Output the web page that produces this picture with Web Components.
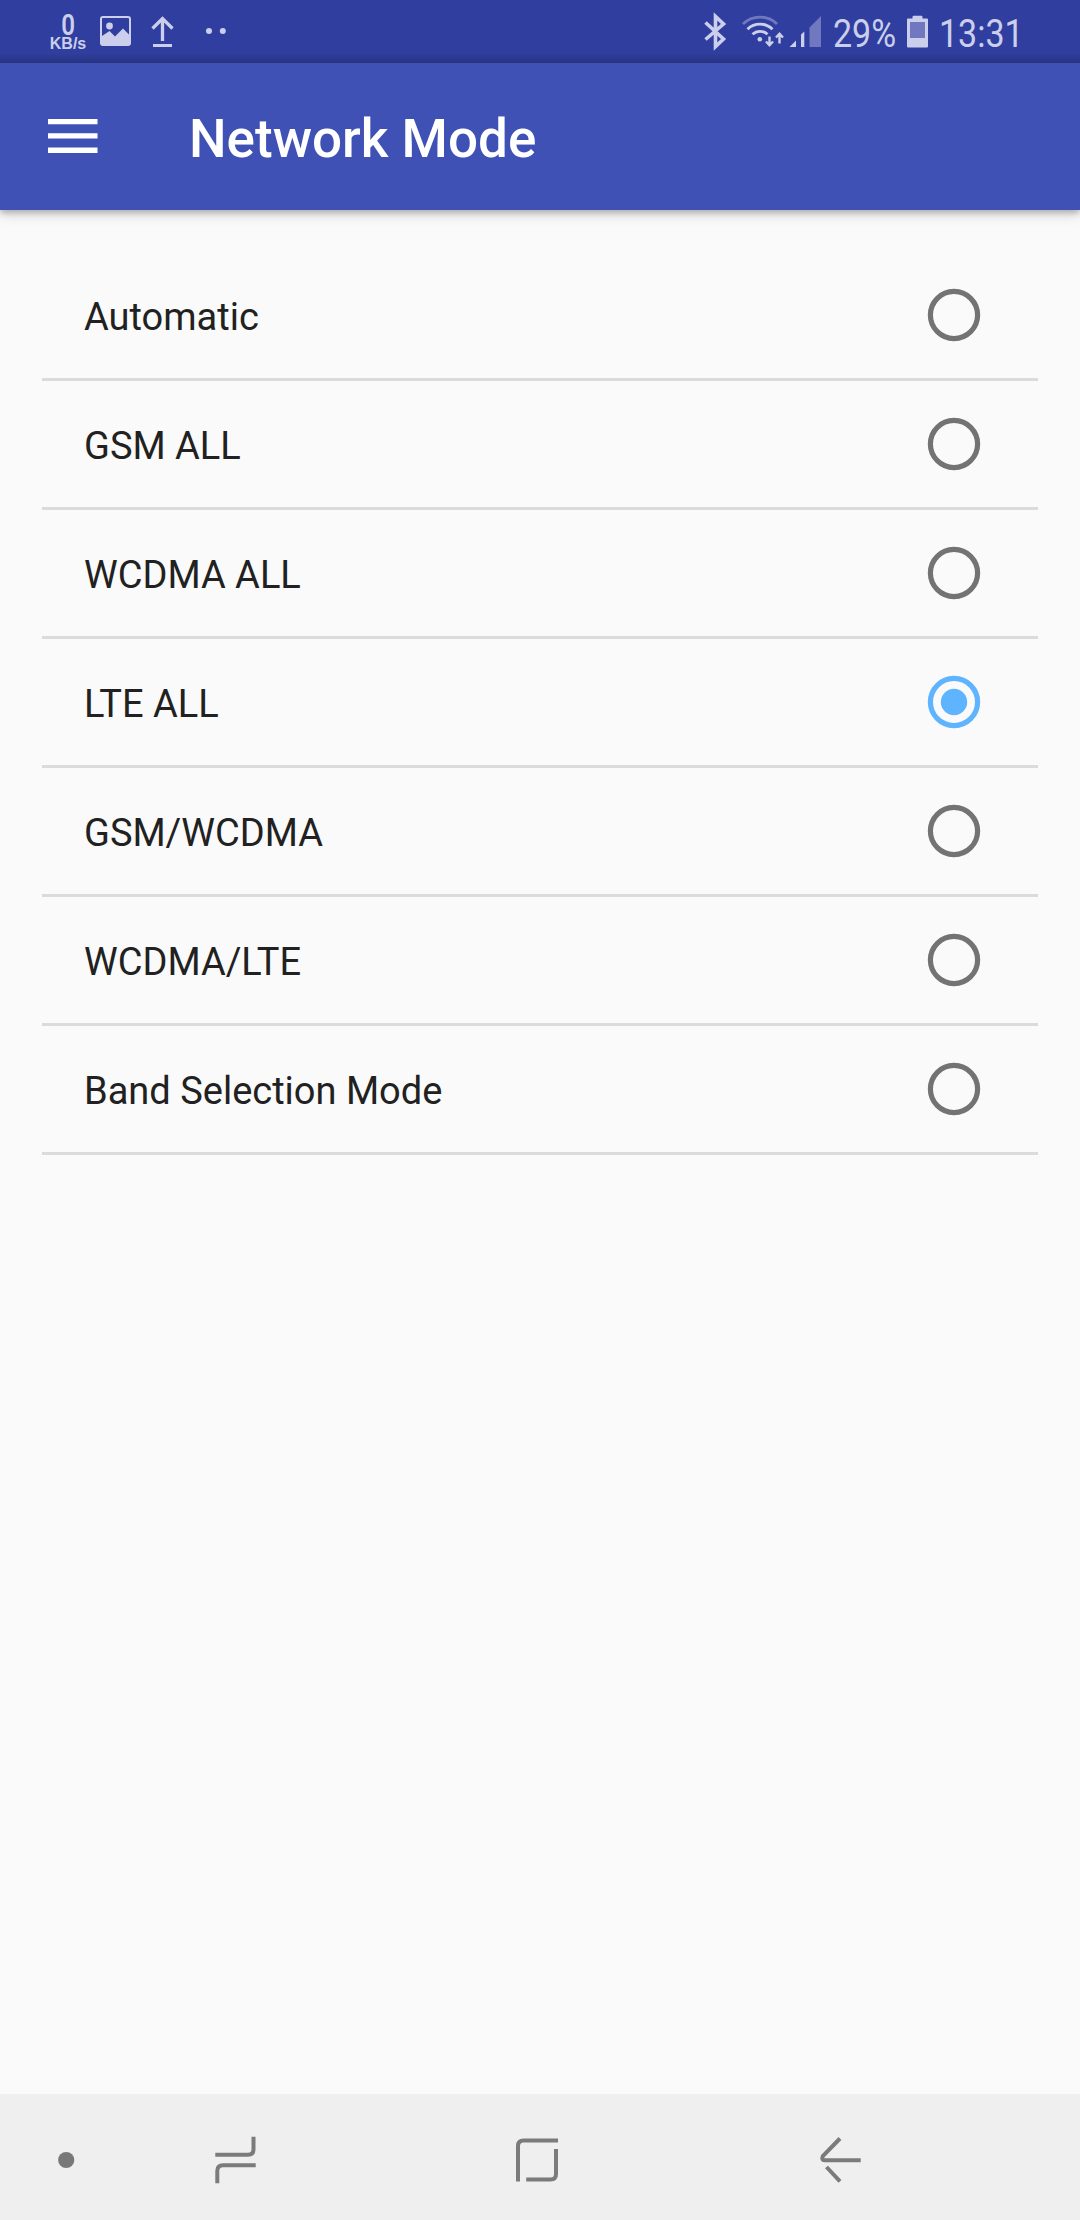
<!DOCTYPE html>
<html lang="en">
<head>
<meta charset="utf-8">
<title>Network Mode</title>
<style>
html,body{margin:0;padding:0}
body{background:#fafafa;font-family:Roboto,"Liberation Sans",sans-serif}
</style>
</head>
<body>
<phone-screen>
  <status-bar slot="status" speed="0" unit="KB/s" battery="29%" time="13:31"></status-bar>
  <app-toolbar slot="toolbar">Network Mode</app-toolbar>
  <option-row>Automatic</option-row>
  <option-row>GSM ALL</option-row>
  <option-row>WCDMA ALL</option-row>
  <option-row checked>LTE ALL</option-row>
  <option-row>GSM/WCDMA</option-row>
  <option-row>WCDMA/LTE</option-row>
  <option-row>Band Selection Mode</option-row>
  <nav-bar slot="nav"></nav-bar>
</phone-screen>
<script>
class Base extends HTMLElement {
  constructor() {
    super();
    this.attachShadow({mode: 'open'}).innerHTML = this.render();
  }
}

customElements.define('phone-screen', class extends Base {
  render() {
    return `<style>
      :host{display:flex;flex-direction:column;height:2220px;width:1080px;overflow:hidden;background:#fafafa}
      main{flex:1;padding:42px 42px 0}
    </style>
    <slot name="status"></slot><slot name="toolbar"></slot>
    <main><slot></slot></main><slot name="nav"></slot>`;
  }
});

customElements.define('status-bar', class extends Base {
  render() {
    const a = n => this.getAttribute(n);
    return `<style>
      :host{display:flex;justify-content:space-between;flex:none;height:63px;box-sizing:border-box;padding:0 55px 0 48px;color:#cbcfeb;
        background:linear-gradient(#303f9f 0,#303f9f 53px,#2d3a92 57px,#27337f 63px)}
      .group{display:flex}
      svg{display:block;flex:none}
      .speed{width:40px;display:flex;flex-direction:column;align-items:center;font-weight:600}
      .n{font-size:29px;line-height:18px;height:18px;padding:16px 0 0 1px;transform:scaleX(.83)}
      .u{font:bold 16px/16px "Liberation Sans",sans-serif;margin-top:2px}
      .t{font-size:39.5px;line-height:63px;padding-top:2px;white-space:nowrap}
      .t span{display:inline-block;transform:scaleX(.86);transform-origin:0 50%}
      .bat{width:69px}.clock{width:86px}
    </style>
    <div class="group">
      <div class="speed"><div class="n">${a('speed')}</div><div class="u">${a('unit')}</div></div>
      <svg width="150" height="63" viewBox="88 0 150 63" fill="#cbcfeb">
        <path fill-rule="evenodd" d="M103 16h25q3 0 3 3v24q0 3-3 3h-25q-3 0-3-3v-24q0-3 3-3zM103 18q-1 0-1 1v17l7.500-5 5.500 5.500 8-8 6 6V19q0-1-1-1z"/>
        <circle cx="109.500" cy="26" r="3.400"/>
        <path d="M162.500 41V19M152.500 28.500l10-10 10 10" fill="none" stroke="#cbcfeb" stroke-width="3.300"/>
        <path d="M153 44h19v3h-19z"/>
        <circle cx="209" cy="31" r="3"/><circle cx="222.800" cy="31" r="3"/>
      </svg>
    </div>
    <div class="group">
      <svg width="133" height="63" viewBox="700 0 133 63" fill="none" stroke="#cbcfeb">
        <path d="M705.500 22.500l18 16.500-8 7.500V16.500l8 7.500-18 15.500" stroke-width="3.600"/>
        <path d="M743 24a24.500 24.500 0 0 1 34 0" stroke="#7079bf" stroke-width="2.800"/>
        <path d="M747.500 29.200a18 18 0 0 1 25 0M752.500 34.300a11 11 0 0 1 15 0" stroke-width="2.900"/>
        <circle cx="759.800" cy="39.300" r="2.300" fill="#cbcfeb" stroke="none"/>
        <path d="M769.500 36.500v8M766 41.500l3.500 3.700 3.500-3.700M779.500 43.500v-9M776 37.500l3.500-3.700 3.500 3.700" stroke-width="2.400"/>
        <path d="M789.500 47l6.500-6.500V47zM801 47V34.500l3.300-3V47z" fill="#cbcfeb" stroke="none"/>
        <path d="M809.500 47V27.500L821 16v31z" fill="#7079bf" stroke="none"/>
      </svg>
      <div class="t bat"><span>${a('battery')}</span></div>
      <svg width="37" height="63" viewBox="902 0 37 63">
        <path d="M907 19.500q0-1 1-1h4.500v-1.500q0-1.200 1.200-1.200h7.600q1.200 0 1.200 1.200v1.500h4.500q1 0 1 1v27q0 1-1 1h-19q-1 0-1-1z" fill="#cbcfeb"/>
        <path d="M910 22h15v16h-15z" fill="#7079bf"/>
      </svg>
      <div class="t clock"><span>${a('time')}</span></div>
    </div>`;
  }
});

customElements.define('app-toolbar', class extends Base {
  render() {
    return `<style>
      :host{display:flex;align-items:center;flex:none;height:147px;box-sizing:border-box;padding-left:48px;background:#3f51b5;color:#fff;position:relative;
        box-shadow:0 3px 6px rgba(0,0,0,.24),0 6px 12px rgba(0,0,0,.1);clip-path:inset(0 0 -24px 0)}
      svg{display:block;padding-bottom:2px}
      h1{margin:0 0 0 91px;padding-top:5px;font-size:53px;font-weight:500;line-height:62px;white-space:nowrap}
    </style>
    <svg width="50" height="36" viewBox="0 0 50 36" fill="#fff"><path d="M0 1h49.500v5.300H0zM0 15.300h49.500v5.300H0zM0 29.600h49.500v5.300H0z"/></svg>
    <h1><slot></slot></h1>`;
  }
});

customElements.define('option-row', class extends Base {
  render() {
    const on = this.hasAttribute('checked');
    const c = on ? '#5fb4ff' : '#737373';
    return `<style>
      :host{display:flex;align-items:center;justify-content:space-between;height:126px;padding:0 57px 0 42px;border-bottom:3px solid #dbdbdb;color:#212121}
      span{font-size:38px;line-height:46px;padding-top:4px;white-space:nowrap}
      svg{display:block}
    </style>
    <span><slot></slot></span>
    <svg width="54" height="54" viewBox="0 0 54 54"><circle cx="27" cy="27" r="23.600" fill="none" stroke="${c}" stroke-width="5.200"/>${on ? `<circle cx="27" cy="27" r="13.200" fill="${c}"/>` : ''}</svg>`;
  }
});

customElements.define('nav-bar', class extends Base {
  render() {
    return `<style>
      :host{display:flex;align-items:center;flex:none;height:126px;padding-left:56px;background:#efefef;box-sizing:border-box}
      svg{display:block;padding-top:6px}
      .r{margin-left:135px}.h{margin-left:253px}.b{margin-left:253px}
    </style>
    <svg width="20" height="50" viewBox="56 2135 20 50"><circle cx="66.200" cy="2160" r="8.100" fill="#787878"/></svg>
    <svg class="r" width="50" height="50" viewBox="211 2135 50 50" fill="none" stroke="#7b7b7b" stroke-width="4"><path d="M215.300 2154.700h32.700q5.500 0 5.500-5.500v-12.500M255.700 2165.300h-32.700q-5.700 0-5.700 5.500v12.400"/></svg>
    <svg class="h" width="50" height="50" viewBox="514 2135 50 50" fill="none" stroke="#7b7b7b" stroke-width="4"><path d="M518 2181.500v-35.500q0-5.500 5.500-5.500h34.500M556 2149v25q0 5.500-5.500 5.500h-24.300"/></svg>
    <svg class="b" width="50" height="50" viewBox="817 2135 50 50" fill="none" stroke="#7b7b7b" stroke-width="4"><path d="M840 2138.500l-17.200 17.700q-1.600 4 1.700 4h36.200M826.500 2167l13.500 14.300" stroke-linejoin="round"/></svg>`;
  }
});
</script>
</body>
</html>
